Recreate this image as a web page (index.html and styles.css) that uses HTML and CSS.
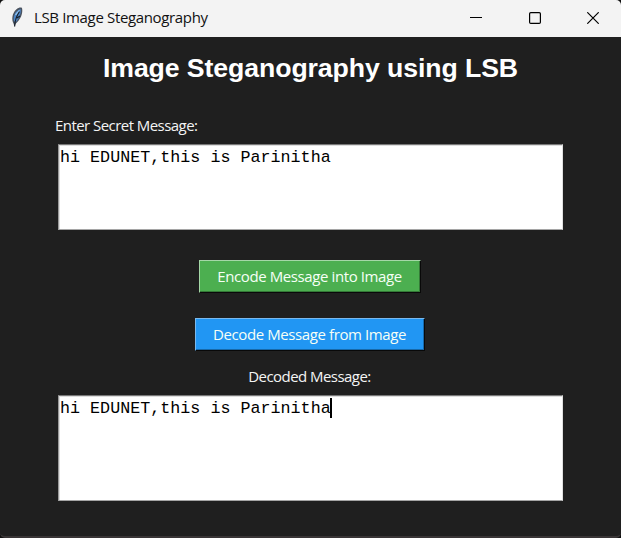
FILE: index.html
```
<!DOCTYPE html>
<html lang="en">
<head>
<meta charset="utf-8">
<title>LSB Image Steganography</title>
<link rel="stylesheet" href="styles.css">
</head>
<body>
<div class="window">
  <header class="titlebar">
    <svg class="feather" width="14" height="22" viewBox="0 0 14 22">
      <path d="M4.500 20.500 3.500 17.500C1.500 14 1.800 7.500 6.200 3.500 8.500 1.500 11 1 12 2 13 6 11.500 11 8.500 14.800L5.500 18Z" fill="#4a5360"/>
      <path d="M4 15C2.800 10 5.500 5 10.500 3 11.500 6.500 9.500 12 5.500 16.500Z" fill="#4b86c8"/>
      <path d="M5.500 9 9.500 4.500" stroke="#8fc0ee" stroke-width="1.500"/>
      <path d="M4.600 20.500Q5 12 9.500 5.500M7 12 10 10" fill="none" stroke="#18202b" stroke-width="1.200"/>
    </svg>
    <h1 class="caption">LSB Image Steganography</h1>
    <div class="controls">
      <svg width="12" height="12" viewBox="0 0 12 12"><path d="M0 5.500H12" stroke="#000"/></svg>
      <svg width="12" height="12" viewBox="0 0 12 12"><rect x=".6" y=".6" width="10.800" height="10.800" rx="1.200" fill="none" stroke="#000" stroke-width="1.200"/></svg>
      <svg width="12" height="12" viewBox="0 0 12 12"><path d="M.3.3 11.700 11.700M11.700.3.3 11.700" stroke="#000" stroke-width="1.200"/></svg>
    </div>
  </header>
  <main class="content">
    <h2 class="heading">Image Steganography using LSB</h2>
    <p class="label label-secret"><span>Enter Secret Message:</span></p>
    <div class="textbox secret">hi EDUNET,this is Parinitha</div>
    <button class="button encode"><span>Encode Message into Image</span></button>
    <button class="button decode"><span>Decode Message from Image</span></button>
    <p class="label label-decoded"><span>Decoded Message:</span></p>
    <div class="textbox decoded">hi EDUNET,this is Parinitha<i class="caret"></i></div>
  </main>
</div>
</body>
</html>
```
FILE: styles.css
```
* { box-sizing: border-box; }
body { margin: 0; background: #101010; }
.window {
  width: 621px;
  height: 538px;
  display: flex;
  flex-direction: column;
  background: #1f1f1f;
  border-bottom: 2px solid #393536;
  border-radius: 5px;
  overflow: hidden;
}
.titlebar {
  height: 37px;
  flex: none;
  display: flex;
  align-items: center;
  padding: 0 22px 0 10px;
  background: #f3f3f3;
}
.feather { margin-top: -3px; }
.caption {
  margin: -3px 0 0 10px;
  font: 400 15px/20px "Open Sans", sans-serif;
  letter-spacing: -0.35px;
  color: #111;
  white-space: nowrap;
}
.controls { display: flex; gap: 46.500px; margin: -1px 0 0 auto; }
.controls svg { display: block; }
.content {
  flex: 1;
  display: flex;
  flex-direction: column;
  align-items: center;
}
.heading {
  margin: 15px 0 0;
  font: 700 26.670px/32px "Liberation Sans", Arial, sans-serif;
  letter-spacing: -0.090px;
  color: #fff;
  white-space: nowrap;
}
.label {
  margin: 0;
  font: 400 15px/20px "Open Sans", sans-serif;
  letter-spacing: -0.55px;
  color: #f4f4f4;
  white-space: nowrap;
}
.label-secret { align-self: flex-start; margin: 31px 0 9px 55px; }
.textbox {
  width: 505px;
  border: 1px solid;
  border-color: #777 #e0e0e0 #a5a5a5 #999;
  box-shadow: inset 1px 1px #ddd;
  background: #fff;
  padding: 2px 1px;
  font: 400 16.670px/20px "Liberation Mono", monospace;
  letter-spacing: 0.030px;
  color: #000;
  white-space: pre;
}
.secret { height: 86px; padding-top: 3px; }
.decoded { height: 106px; padding-top: 3px; }
.button {
  height: 33px;
  padding: 0 0 2px;
  border: 1px solid;
  border-radius: 0;
  font: 400 15px/20px "Open Sans", sans-serif;
  letter-spacing: -0.4px;
  color: #f6fff6;
  white-space: nowrap;
}
.encode {
  width: 222px;
  margin: 30px 2px 0 0;
  background: #4caf50;
  border-color: #a5d7a7 #090909 #090909 #a5d7a7;
  box-shadow: inset -1px -1px #347a37;
}
.decode {
  width: 230px;
  margin: 25px 2px 0 0;
  background: #2196f3;
  border-color: #79b9ee #090909 #090909 #79b9ee;
  box-shadow: inset -1px -1px #1769aa;
}
.label-decoded { margin: 15px 2px 9px 0; }
.caret {
  display: inline-block;
  width: 2px;
  height: 20px;
  margin: -1px 0 0 -1px;
  background: #000;
  vertical-align: top;
}
```
